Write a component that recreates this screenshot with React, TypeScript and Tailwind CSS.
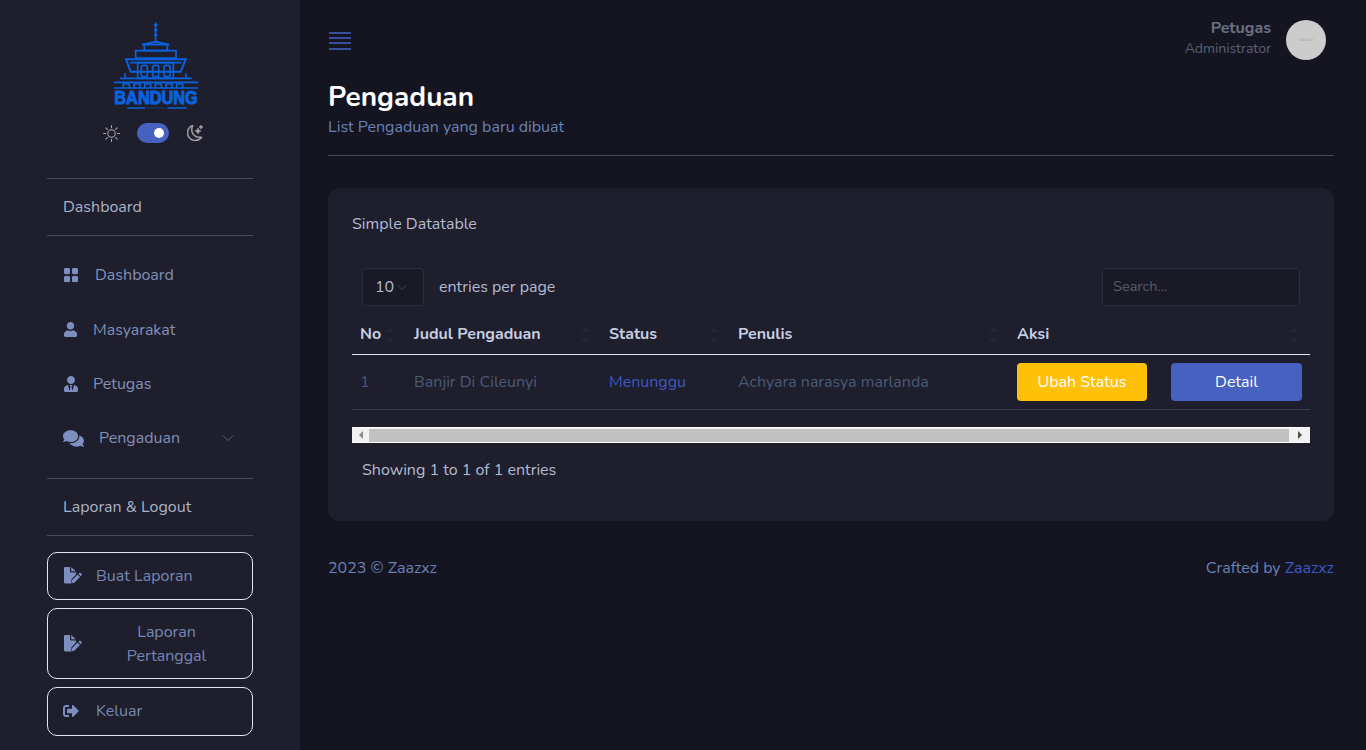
import React from "react";
import { FaUser, FaUserTie, FaComments, FaSignOutAlt } from "react-icons/fa";
import { BsSun, BsMoonStars } from "react-icons/bs";

const FONT = "[font-family:Nunito,Lato,'Noto_Sans',sans-serif]";

function Logo() {
  const c = "#0a63de";
  return (
    <svg className="overflow-visible" width="94" height="92" viewBox="60 30 282 276" fill="none" stroke={c} strokeWidth="5">
      <path d="M197 37v58" strokeWidth="5" />
      <path d="M197 42v6M197 57v6M197 72v6" strokeWidth="10" />
      <path d="M156 104l41-9 41 9" strokeWidth="6" />
      <path d="M163 104h69v18h-69z" />
      <path d="M137 122h121v22H137z" />
      <path d="M108 148h179l-15 37H122z" strokeWidth="6" />
      <path d="M120 158h155" />
      <path d="M143 158h107v47H143z" />
      <rect x="154" y="166" width="18" height="34" rx="6" />
      <rect x="188" y="166" width="18" height="34" rx="6" />
      <rect x="222" y="166" width="18" height="34" rx="6" />
      <path d="M90 205h215M72 217h253M105 190v15M288 190v15" />
      <path d="M100 234v-12h18v12M132 234v-12h18v12M164 234v-12h18v12M196 234v-12h18v12M228 234v-12h18v12M260 234v-12h18v12" />
      <path d="M72 234h253" />
      <text x="198" y="282" textAnchor="middle" fill={c} stroke={c} strokeWidth="3" fontFamily="'Liberation Sans',sans-serif" fontWeight="700" fontSize="56" textLength="250" lengthAdjust="spacingAndGlyphs">BANDUNG</text>
      <path d="M112 294h54M232 294h58" strokeWidth="4" />
      <path d="M172 294h54" strokeWidth="2" strokeDasharray="4 2" />
    </svg>
  );
}

function GridIcon() {
  return (
    <svg width="16" height="14" viewBox="0 0 16 14" fill="#7c8fc0">
      <rect x="1" y="0" width="6" height="6.2" rx="1.4" />
      <rect x="9" y="0" width="6" height="6.2" rx="1.4" />
      <rect x="1" y="8" width="6" height="6.2" rx="1.4" />
      <rect x="9" y="8" width="6" height="6.2" rx="1.4" />
    </svg>
  );
}

function FilePenIcon() {
  return (
    <svg width="19" height="17" viewBox="0 0 19 17" fill="#7c8fc0">
      <path d="M1 1.2C1 .5 1.5 0 2.2 0H7v4.5c0 .5.4.9.9.9H13v2.2l-4.6 4.6-.5 3.4.3.9H2.2C1.5 16.5 1 16 1 15.3z" />
      <path d="M8.2 0v4.2h4.6z" />
      <path d="M14.6 7.6l2.4 2.4-5.7 5.7-3 .6.6-3z" />
      <path d="M15.4 6.8l.8-.8c.4-.4 1-.4 1.4 0l1 1c.4.4.4 1 0 1.4l-.8.8z" />
    </svg>
  );
}

function Divider() {
  return <div className="h-px bg-[#4b4b57]" />;
}

function SideButton({ icon, children, tall, h }: { icon: React.ReactNode; children: React.ReactNode; tall?: boolean; h: string }) {
  return (
    <div className={`flex items-center border border-[#e4e6ef] rounded-[10px] pl-[15px] text-[16px] leading-6 text-[#7787b5] ${h}`}>
      <span className="flex w-[19px] shrink-0 text-[#7c8fc0]">{icon}</span>
      <span className={tall ? "ml-[14px] mt-px w-[141px] text-center" : "ml-[14px]"}>{children}</span>
    </div>
  );
}

function NavItem({ icon, label, gap, chevron }: { icon: React.ReactNode; label: string; gap: string; chevron?: boolean }) {
  return (
    <div className="flex items-center h-[54.4px] pl-4 pr-[19px] text-[16px] text-[#8090b8]">
      <span className="flex items-center shrink-0 text-[#7c8fc0]">{icon}</span>
      <span className={gap}>{label}</span>
      {chevron && (
        <svg className="ml-auto" width="12" height="8" viewBox="0 0 12 8" fill="none" stroke="#5c6478" strokeWidth="1">
          <path d="M1 1.5l5 5 5-5" />
        </svg>
      )}
    </div>
  );
}

function Sort() {
  return (
    <span className="flex flex-col gap-[7px] mt-px">
      <span className="w-0 h-0 border-x-[4px] border-x-transparent border-b-[4px] border-b-[#272734]" />
      <span className="w-0 h-0 border-x-[4px] border-x-transparent border-t-[4px] border-t-[#272734]" />
    </span>
  );
}

function Th({ children }: { children: React.ReactNode }) {
  return (
    <div className="flex items-center justify-between pl-2 pr-3 text-[16px] font-bold text-[#c8cee2]">
      <span className="-mt-[2px]">{children}</span>
      <Sort />
    </div>
  );
}

export default function App() {
  return (
    <div className={`${FONT} flex h-[750px] overflow-hidden bg-[#151521]`}>
      <aside className="w-[300px] shrink-0 bg-[#1e1e2d] px-[47px]">
        <div className="flex justify-center pt-5 pl-[13px]">
          <Logo />
        </div>
        <div className="flex items-center justify-center gap-[17px] mt-[11px] ml-[6px] h-5">
          <BsSun className="text-[#a8a8a8] text-[17px]" />
          <span className="relative w-8 h-5 rounded-full bg-[#4661c0]">
            <span className="absolute left-[17px] top-[5px] w-[10px] h-[10px] rounded-full bg-white" />
          </span>
          <BsMoonStars className="text-[#a8a8a8] text-[16px] ml-px" stroke="currentColor" strokeWidth="0.5" />
        </div>
        <div className="mt-[35px]"><Divider /></div>
        <div className="h-[56px] flex items-center pl-4 text-[16px] text-[#aab1c6]">Dashboard</div>
        <Divider />
        <div className="mt-3">
          <NavItem icon={<GridIcon />} label="Dashboard" gap="ml-4" />
          <NavItem icon={<FaUser className="text-[15px]" />} label="Masyarakat" gap="ml-[15px]" />
          <NavItem icon={<FaUserTie className="text-[16px]" />} label="Petugas" gap="ml-[14px]" />
          <NavItem icon={<FaComments className="text-[21px]" />} label="Pengaduan" gap="ml-[15px]" chevron />
        </div>
        <div className="mt-3"><Divider /></div>
        <div className="h-[56px] flex items-center pl-4 text-[16px] text-[#aab1c6]">Laporan &amp; Logout</div>
        <Divider />
        <div className="flex flex-col gap-2 mt-4">
          <SideButton icon={<FilePenIcon />} h="h-12">Buat Laporan</SideButton>
          <SideButton icon={<FilePenIcon />} tall h="h-[71px]">Laporan Pertanggal</SideButton>
          <SideButton icon={<FaSignOutAlt className="text-[16px]" />} h="h-[49px]">Keluar</SideButton>
        </div>
      </aside>

      <main className="flex-1 pl-7 pr-8">
        <header className="flex items-start justify-between h-[80px] pt-5">
          <svg className="mt-[12px] ml-px" width="22" height="18" viewBox="0 0 22 18" stroke="#4661c0" strokeWidth="1.4">
            <path d="M0 1h22M0 6h22M0 11h22M0 17h22" />
          </svg>
          <div className="flex items-center gap-[15px] pr-2">
            <div className="text-right -mt-[2px]">
              <div className="text-[16px] font-bold leading-[18px] text-[#6a7282] -mt-[2px]">Petugas</div>
              <div className="text-[14px] leading-[18px] mt-[3px] text-[#5a6274]">Administrator</div>
            </div>
            <div className="flex items-center justify-center w-10 h-10 rounded-full bg-[#cccccc] text-[3px] text-[#969696]">
              100 x 100
            </div>
          </div>
        </header>

        <h1 className="text-[28px] font-bold leading-8 text-white mt-px">Pengaduan</h1>
        <p className="text-[16px] leading-5 mt-[4px] text-[#6a81b5]">List Pengaduan yang baru dibuat</p>
        <div className="h-px bg-[#4b4b57] mt-[18px]" />

        <section className="mt-8 h-[333px] rounded-xl bg-[#1e1e2d] pl-6 pr-6 pt-[26px]">
          <div className="text-[16px] leading-5 text-[#b4bbd0]">Simple Datatable</div>

          <div className="flex items-center justify-between mt-[34px] pl-[10px] pr-[10px]">
            <div className="flex items-center gap-[15px]">
              <div className="flex items-center w-[62px] h-[38px] pl-[12px] border border-[#2c2c40] rounded bg-[#1a1a27] text-[16px] text-[#b4bbd0]">
                10
                <svg className="ml-[3px] mt-[1px]" width="10" height="6" viewBox="0 0 10 6" fill="none" stroke="#3f4555" strokeWidth="1">
                  <path d="M1 .5l4 4 4-4" />
                </svg>
              </div>
              <span className="text-[16px] text-[#b4bbd0]">entries per page</span>
            </div>
            <div className="flex items-center w-[198px] h-[38px] pl-[10px] border border-[#2c2c40] rounded bg-[#1a1a27] text-[14.5px] text-[#5a5e68]">
              Search...
            </div>
          </div>

          <div className="mt-[9px]">
            <div className="grid grid-cols-[54px_195px_129px_279px_301px] h-[40px] border-b border-[#e4e6ef] w-full">
              <Th>No</Th>
              <Th>Judul Pengaduan</Th>
              <Th>Status</Th>
              <Th>Penulis</Th>
              <Th>Aksi</Th>
            </div>
            <div className="grid grid-cols-[54px_195px_129px_279px_301px] h-[55px] items-center border-b border-[#3e3e4a] text-[16px] text-[#4c5a75]">
              <div className="pl-2">1</div>
              <div className="pl-2">Banjir Di Cileunyi</div>
              <div className="pl-2 text-[#3e59c2]">Menunggu</div>
              <div className="pl-2">Achyara narasya marlanda</div>
              <div className="pl-2 flex gap-6">
                <div className="flex items-center justify-center w-[130px] h-[38px] rounded bg-[#ffc107] text-white">Ubah Status</div>
                <div className="flex items-center justify-center w-[131px] h-[38px] rounded bg-[#4661c0] text-white">Detail</div>
              </div>
            </div>

            <div className="flex items-center h-[16px] mt-[17px] bg-[#f1f1f1] border-y border-white">
              <div className="flex items-center justify-center w-[17px]">
                <span className="w-0 h-0 border-y-[4px] border-y-transparent border-r-[4px] border-r-[#8a8a8a]" />
              </div>
              <div className="flex-1 h-[13px] bg-[#c1c1c1]" />
              <div className="flex items-center justify-center w-[21px]">
                <span className="w-0 h-0 border-y-[4px] border-y-transparent border-l-[4px] border-l-[#505050]" />
              </div>
            </div>
          </div>

          <div className="mt-[17px] pl-[10px] text-[16px] leading-5 text-[#b4bbd0]">Showing 1 to 1 of 1 entries</div>
        </section>

        <footer className="flex justify-between mt-[37px] text-[16px] leading-5 text-[#6a81b5]">
          <span>2023 © Zaazxz</span>
          <span>Crafted by <span className="text-[#3e59c2]">Zaazxz</span></span>
        </footer>
      </main>
    </div>
  );
}
